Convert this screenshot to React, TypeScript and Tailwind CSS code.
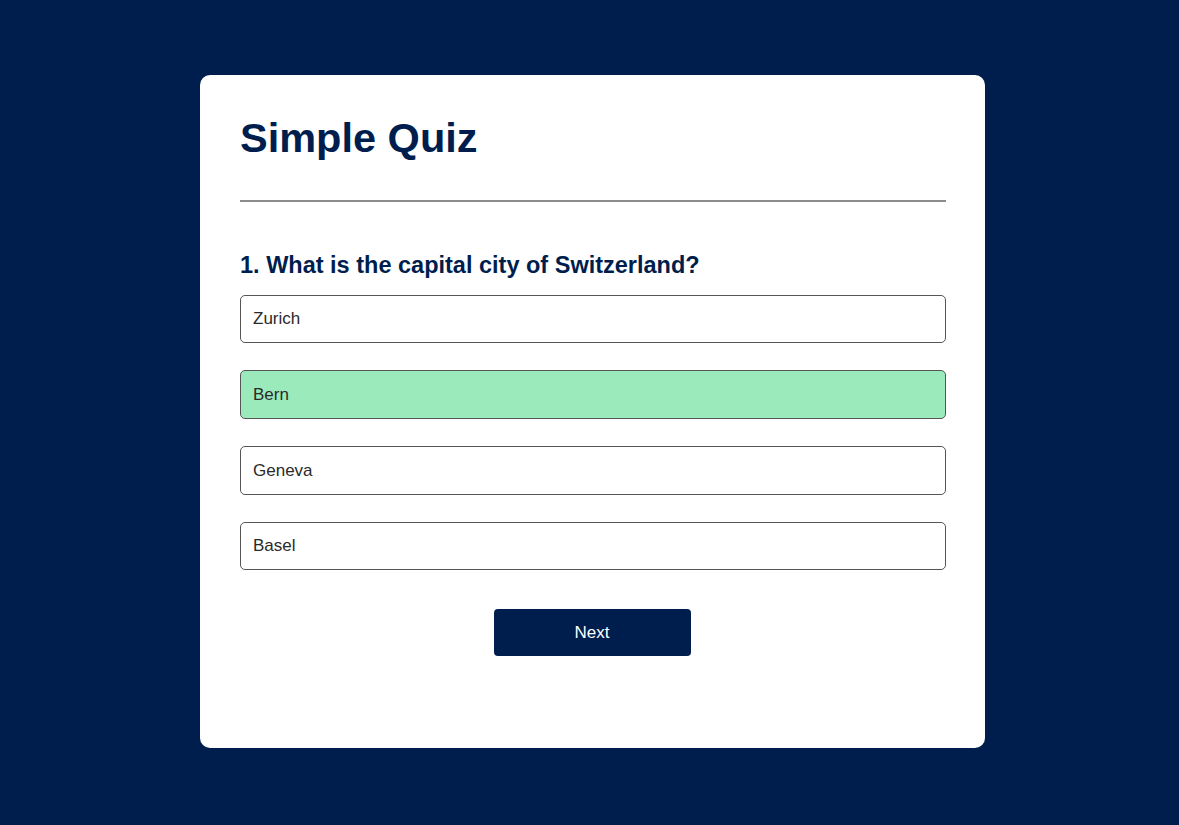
import React from "react";

const options = [
  { label: "Zurich", correct: false },
  { label: "Bern", correct: true },
  { label: "Geneva", correct: false },
  { label: "Basel", correct: false },
];

export default function App() {
  return (
    <div
      className="min-h-[825px] w-full bg-[#001e4d] pt-[75px]"
      style={{ fontFamily: '"Liberation Sans", Arial, sans-serif' }}
    >
      <div className="ml-[200px] w-[785px] h-[673px] rounded-[10px] bg-white pl-[40px] pr-[39px] pt-[39px] flex flex-col">
        <h1 className="shrink-0 text-[41.5px] leading-[48px] font-bold text-[#001e4d] mb-[38px]">
          Simple Quiz
        </h1>
        <div className="shrink-0 h-[1.5px] bg-[#8c8c8c] w-full" />
        <h2 className="shrink-0 mt-[50px] text-[23.5px] leading-[27px] font-bold text-[#001e4d] mb-[16px]">
          1. What is the capital city of Switzerland?
        </h2>
        <div className="shrink-0 flex flex-col gap-[27.3px]">
          {options.map((o) => (
            <div
              key={o.label}
              className={
                "h-[48.5px] rounded-[5px] border border-[#555] flex items-center pl-[12px] pr-[13px] text-[17px] text-[#2a2a2a] " +
                (o.correct ? "bg-[#9aeabc]" : "bg-white")
              }
            >
              {o.label}
            </div>
          ))}
        </div>
        <div className="shrink-0 flex justify-center mt-[39px]">
          <button className="w-[197px] h-[47px] mr-[2px] rounded-[4px] bg-[#001e4d] text-white text-[17px]">
            Next
          </button>
        </div>
      </div>
    </div>
  );
}
